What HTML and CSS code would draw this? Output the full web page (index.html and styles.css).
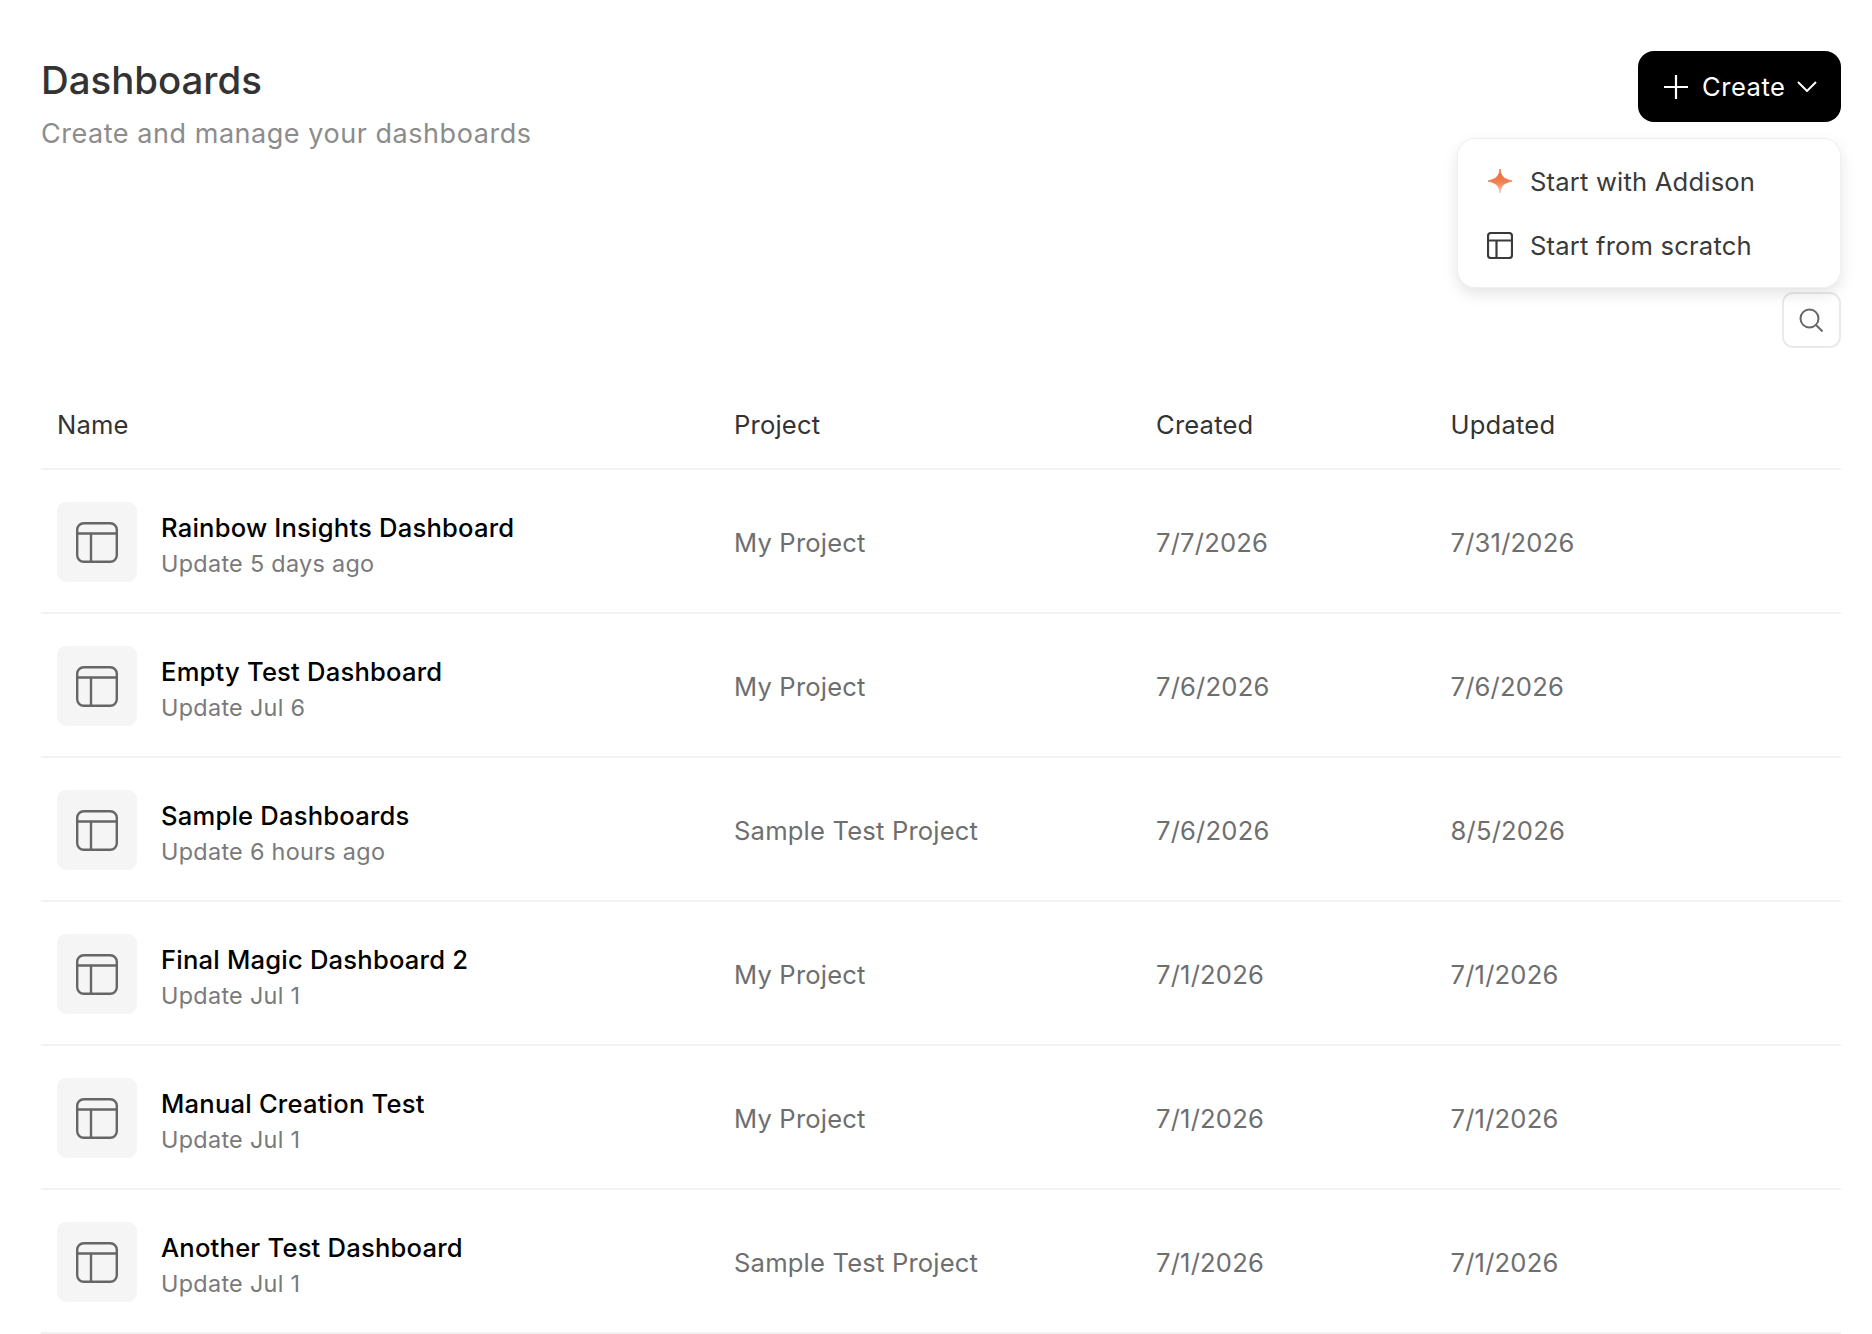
FILE: index.html
```html
<!DOCTYPE html>
<html lang="en">
<head>
    <meta charset="UTF-8">
    <meta name="viewport" content="width=device-width, initial-scale=1.0">
    <title>Dashboards</title>
    <link rel="stylesheet" href="styles.css">
</head>
<body>
    <svg class="icon-defs" width="0" height="0">
        <symbol id="layout" viewBox="0 0 42 41">
            <rect x="1.2" y="1.2" width="39.6" height="38.6" rx="6.500" fill="none" stroke="currentColor" stroke-width="2.400"/>
            <path d="M1 11.500H41M15 11.500V40" fill="none" stroke="currentColor" stroke-width="2.400"/>
        </symbol>
    </svg>

    <div class="page">
        <div class="page-header">
            <div>
                <h1>Dashboards</h1>
                <p class="subtitle">Create and manage your dashboards</p>
            </div>
            <div class="create-wrap">
                <button class="create-button">
                    <svg class="plus-icon" viewBox="0 0 24 24"><path d="M12 0V24M0 12H24"/></svg>
                    Create
                    <svg class="chevron-icon" viewBox="0 0 20 11"><path d="M1 1L10 10L19 1"/></svg>
                </button>
                <div class="create-menu">
                    <div class="menu-item">
                        <svg class="star-icon" viewBox="0 0 24 24">
                            <defs>
                                <linearGradient id="star-fill" x1="0" y1="0" x2="0" y2="1">
                                    <stop offset="0" stop-color="#ec6534"/>
                                    <stop offset="0.55" stop-color="#f0804f"/>
                                    <stop offset="1" stop-color="#f9c4a6"/>
                                </linearGradient>
                            </defs>
                            <path d="M12 0C12.700 6.400 14.800 9.800 24 12C14.800 14.200 12.700 17.600 12 24C11.300 17.600 9.200 14.200 0 12C9.200 9.800 11.300 6.400 12 0Z" fill="url(#star-fill)" stroke="url(#star-fill)" stroke-width="0.8"/>
                        </svg>
                        Start with Addison
                    </div>
                    <div class="menu-item">
                        <svg class="scratch-icon" viewBox="0 0 26 27">
                            <rect x="1" y="1" width="24" height="25" rx="3" fill="none" stroke="currentColor" stroke-width="2.200"/>
                            <path d="M1 8.500H25M9.500 8.500V26" fill="none" stroke="currentColor" stroke-width="2.200"/>
                        </svg>
                        Start from scratch
                    </div>
                </div>
            </div>
        </div>

        <div class="toolbar">
            <button class="search-button">
                <svg viewBox="0 0 24 24"><circle cx="10.500" cy="10.500" r="9"/><path d="M17 17L23.500 23.500"/></svg>
            </button>
        </div>

        <div class="table-row table-head">
            <div>Name</div>
            <div>Project</div>
            <div>Created</div>
            <div>Updated</div>
        </div>

        <div class="table-row">
            <div class="name-cell">
                <div class="tile"><svg><use href="#layout"/></svg></div>
                <div class="name-text">
                    <div class="dash-name">Rainbow Insights Dashboard</div>
                    <div class="dash-update">Update 5 days ago</div>
                </div>
            </div>
            <div>My Project</div>
            <div>7/7/2026</div>
            <div>7/31/2026</div>
        </div>
        <div class="table-row">
            <div class="name-cell">
                <div class="tile"><svg><use href="#layout"/></svg></div>
                <div class="name-text">
                    <div class="dash-name">Empty Test Dashboard</div>
                    <div class="dash-update">Update Jul 6</div>
                </div>
            </div>
            <div>My Project</div>
            <div>7/6/2026</div>
            <div>7/6/2026</div>
        </div>
        <div class="table-row">
            <div class="name-cell">
                <div class="tile"><svg><use href="#layout"/></svg></div>
                <div class="name-text">
                    <div class="dash-name">Sample Dashboards</div>
                    <div class="dash-update">Update 6 hours ago</div>
                </div>
            </div>
            <div>Sample Test Project</div>
            <div>7/6/2026</div>
            <div>8/5/2026</div>
        </div>
        <div class="table-row">
            <div class="name-cell">
                <div class="tile"><svg><use href="#layout"/></svg></div>
                <div class="name-text">
                    <div class="dash-name">Final Magic Dashboard 2</div>
                    <div class="dash-update">Update Jul 1</div>
                </div>
            </div>
            <div>My Project</div>
            <div>7/1/2026</div>
            <div>7/1/2026</div>
        </div>
        <div class="table-row">
            <div class="name-cell">
                <div class="tile"><svg><use href="#layout"/></svg></div>
                <div class="name-text">
                    <div class="dash-name">Manual Creation Test</div>
                    <div class="dash-update">Update Jul 1</div>
                </div>
            </div>
            <div>My Project</div>
            <div>7/1/2026</div>
            <div>7/1/2026</div>
        </div>
        <div class="table-row">
            <div class="name-cell">
                <div class="tile"><svg><use href="#layout"/></svg></div>
                <div class="name-text">
                    <div class="dash-name">Another Test Dashboard</div>
                    <div class="dash-update">Update Jul 1</div>
                </div>
            </div>
            <div>Sample Test Project</div>
            <div>7/1/2026</div>
            <div>7/1/2026</div>
        </div>
    </div>
</body>
</html>
```

FILE: styles.css
```css
* {
    box-sizing: border-box;
}
body {
    margin: 0;
    font-family: Inter, "Liberation Sans", sans-serif;
    background: #fff;
    color: #333;
}
.icon-defs {
    position: absolute;
}
.page {
    height: 1334px;
    padding: 51px 31px 0 41px;
    overflow: hidden;
}
.page-header {
    display: flex;
    justify-content: space-between;
    height: 241px;
}
h1 {
    margin: 5px 0 0;
    font-size: 38.4px;
    line-height: 48px;
    font-weight: 500;
    color: #333;
}
.subtitle {
    margin: 12px 0 0;
    font-size: 27px;
    line-height: 36px;
    letter-spacing: 0.54px;
    color: #8c8c8c;
}
.create-wrap {
    position: relative;
}
.create-button {
    display: flex;
    align-items: center;
    width: 203px;
    height: 71px;
    padding: 0 24px 0 26px;
    border: 0;
    border-radius: 16px;
    background: #000;
    color: #fff;
    font-family: inherit;
    font-size: 25.6px;
    font-weight: 400;
    letter-spacing: 0.5px;
}
.plus-icon {
    width: 24px;
    height: 24px;
    margin-right: 14px;
    flex: none;
    fill: none;
    stroke: #fff;
    stroke-width: 2.200;
}
.chevron-icon {
    width: 20px;
    height: 11px;
    margin-left: auto;
    flex: none;
    fill: none;
    stroke: #fff;
    stroke-width: 2;
}
.create-menu {
    position: absolute;
    top: 88px;
    right: 1px;
    width: 382px;
    height: 148px;
    padding: 10px 0;
    border-radius: 17px;
    background: #fff;
    box-shadow: 0 0 0 1px #f0f0f0, 0 6px 16px rgba(0, 0, 0, 0.12);
    z-index: 2;
}
.menu-item {
    display: flex;
    align-items: center;
    height: 64px;
    padding-left: 29px;
    font-size: 25.6px;
    letter-spacing: 0.18px;
    color: #3a3a3a;
}
.star-icon {
    width: 24px;
    height: 24px;
    margin: 0 18px 0 1px;
    flex: none;
    overflow: visible;
}
.scratch-icon {
    width: 26px;
    height: 27px;
    margin-right: 17px;
    flex: none;
}
.toolbar {
    display: flex;
    justify-content: flex-end;
    height: 56px;
    margin-bottom: 32px;
}
.search-button {
    display: flex;
    align-items: center;
    justify-content: center;
    width: 59px;
    height: 56px;
    padding: 0 2px 0 0;
    border: 2px solid #eaeaea;
    border-radius: 11px;
    background: #fff;
}
.search-button svg {
    width: 24px;
    height: 24px;
    fill: none;
    stroke: #666;
    stroke-width: 2;
}
.table-row {
    display: grid;
    grid-template-columns: 677px 422px 294.5px 1fr;
    align-items: center;
    height: 144px;
    padding: 2px 0 0 16px;
    border-bottom: 2px solid #f2f2f2;
    font-size: 25.6px;
    letter-spacing: 0.18px;
    color: #6e6e6e;
}
.table-head {
    height: 90px;
    padding-top: 0;
    color: #333;
}
.name-cell {
    display: flex;
    align-items: center;
}
.tile {
    display: flex;
    align-items: center;
    justify-content: center;
    width: 80px;
    height: 80px;
    margin-right: 24px;
    border-radius: 9px;
    background: #f5f5f5;
    color: #666;
}
.tile svg {
    width: 42px;
    height: 41px;
}
.name-text {
    margin-top: 7px;
}
.dash-name {
    font-size: 25.6px;
    line-height: 36px;
    font-weight: 500;
    letter-spacing: 0.2px;
    color: #000;
}
.dash-update {
    margin-top: 1px;
    font-size: 23.4px;
    line-height: 34px;
    letter-spacing: 0.3px;
    color: #7a7a7a;
}
```
